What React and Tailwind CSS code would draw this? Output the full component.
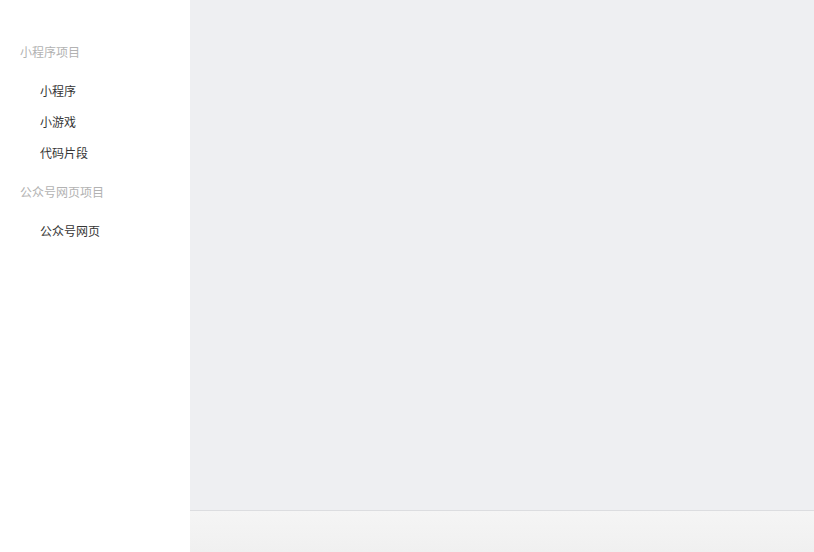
import React from 'react';

const sections = [
  { title: '小程序项目', items: ['小程序', '小游戏', '代码片段'] },
  { title: '公众号网页项目', items: ['公众号网页'] },
];

const App = () => {
  return (
    <div
      className="flex w-[814px] h-[552px] overflow-hidden text-[12px]"
      style={{ fontFamily: '"Noto Sans CJK SC", "Noto Sans", sans-serif' }}
    >
      {/* Sidebar */}
      <div className="w-[190px] shrink-0 bg-white pt-[42px]">
        {sections.map((section, i) => (
          <div key={section.title} className={i > 0 ? 'mt-[14px]' : ''}>
            <div className="h-5 leading-5 pl-5 mb-[13px] text-[#b2b2b2]">{section.title}</div>
            {section.items.map((item) => (
              <div key={item} className="h-[31px] flex items-center pl-10 text-[#353535]">
                {item}
              </div>
            ))}
          </div>
        ))}
      </div>

      {/* Main */}
      <div className="flex-1 flex flex-col">
        <div className="flex-1 bg-[#eeeff2]" />
        <div className="h-[42px] border-t border-[#dcdde0] bg-gradient-to-b from-[#f5f5f5] to-[#f0f0f0]" />
      </div>
    </div>
  );
};

export default App;
